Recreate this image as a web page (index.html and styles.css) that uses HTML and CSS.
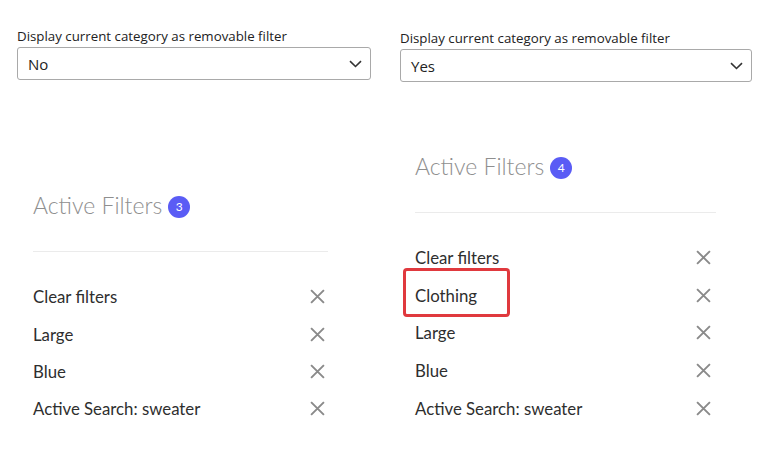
FILE: index.html
```html
<!DOCTYPE html>
<html>

<head>
    <title>Active Filters</title>
    <link rel="stylesheet" href="styles.css">
</head>

<body>
    <div class="compare">
        <div class="setting">
            <p class="setting-label">Display current category as removable filter</p>
            <div class="fake-select">
                <span>No</span>
                <svg class="chevron" width="13" height="8" viewBox="0 0 13 8"><path d="M1 1.2l5.5 5.3L12 1.2" fill="none" stroke="#333" stroke-width="1.6"/></svg>
            </div>
        </div>
        <div class="setting setting-right">
            <p class="setting-label">Display current category as removable filter</p>
            <div class="fake-select">
                <span>Yes</span>
                <svg class="chevron" width="13" height="8" viewBox="0 0 13 8"><path d="M1 1.2l5.5 5.3L12 1.2" fill="none" stroke="#333" stroke-width="1.6"/></svg>
            </div>
        </div>

        <!-- Without category -->
        <div class="panel">
            <h3 class="panel-title">Active Filters <span class="badge">3</span></h3>
            <hr>
            <ul class="filters">
                <li>Clear filters <svg class="x" viewBox="0 0 14 14"><path d="M1 1l12 12M13 1L1 13"/></svg></li>
                <li>Large <svg class="x" viewBox="0 0 14 14"><path d="M1 1l12 12M13 1L1 13"/></svg></li>
                <li>Blue <svg class="x" viewBox="0 0 14 14"><path d="M1 1l12 12M13 1L1 13"/></svg></li>
                <li>Active Search: sweater <svg class="x" viewBox="0 0 14 14"><path d="M1 1l12 12M13 1L1 13"/></svg></li>
            </ul>
        </div>

        <!-- With category -->
        <div class="panel panel-right">
            <h3 class="panel-title">Active Filters <span class="badge">4</span></h3>
            <hr>
            <ul class="filters">
                <li>Clear filters <svg class="x" viewBox="0 0 14 14"><path d="M1 1l12 12M13 1L1 13"/></svg></li>
                <li class="highlight">Clothing <svg class="x" viewBox="0 0 14 14"><path d="M1 1l12 12M13 1L1 13"/></svg></li>
                <li>Large <svg class="x" viewBox="0 0 14 14"><path d="M1 1l12 12M13 1L1 13"/></svg></li>
                <li>Blue <svg class="x" viewBox="0 0 14 14"><path d="M1 1l12 12M13 1L1 13"/></svg></li>
                <li>Active Search: sweater <svg class="x" viewBox="0 0 14 14"><path d="M1 1l12 12M13 1L1 13"/></svg></li>
            </ul>
        </div>
    </div>
</body>

</html>
```

FILE: styles.css
```css
body {
    margin: 0;
    background: #fff;
    font-family: Lato, "Noto Sans", sans-serif;
    color: #333;
}

.compare {
    display: grid;
    grid-template-columns: 354px 352px;
    column-gap: 29px;
    row-gap: 68px;
    align-items: end;
    padding: 27px 0 0 17px;
}

.setting {
    align-self: start;
}

.setting-right {
    margin-top: 2px;
}

.setting-label {
    margin: 0 0 2px;
    font-family: "Open Sans", sans-serif;
    font-size: 13.3px;
    color: #222;
}

.fake-select {
    display: flex;
    align-items: center;
    justify-content: space-between;
    height: 31px;
    padding: 0 8px 0 10px;
    border: 1px solid #a9a9a9;
    border-radius: 3px;
    font-family: "Open Sans", sans-serif;
    font-size: 15px;
    color: #222;
}

/* Active filter panels */
.panel {
    margin-left: 16px;
    width: 295px;
}

.panel-right {
    margin-left: 15px;
    width: 301px;
}

.panel-title {
    display: flex;
    align-items: center;
    gap: 6px;
    margin: 0;
    height: 32px;
    font-size: 23px;
    font-weight: 300;
    color: #8f8f8f;
}

.badge {
    display: inline-flex;
    align-items: center;
    justify-content: center;
    width: 22px;
    height: 22px;
    border-radius: 50%;
    background-color: #5a5cf5;
    color: #fff;
    font-size: 12px;
    font-weight: 400;
    margin-top: 3px;
}

hr {
    margin: 30px 0 0;
    border: none;
    border-top: 1px solid #ebebeb;
}

.filters {
    list-style: none;
    margin: 26px 0 0;
    padding: 0;
}

.filters li {
    position: relative;
    display: flex;
    align-items: center;
    justify-content: space-between;
    height: 37.2px;
    font-size: 16.8px;
    color: #2e2e2e;
}

.panel-right .filters li {
    height: 37.6px;
}

.x {
    width: 15px;
    height: 15px;
    margin-right: 3px;
    fill: none;
    stroke: #8a8a8a;
    stroke-width: 1.8;
}

.panel-right .x {
    margin-right: 5px;
}

/* red callout round the category filter */
.highlight::before {
    content: "";
    position: absolute;
    left: -12px;
    top: -9px;
    width: 101px;
    height: 43px;
    border: 3px solid #e0393e;
    border-radius: 4px;
}
```
